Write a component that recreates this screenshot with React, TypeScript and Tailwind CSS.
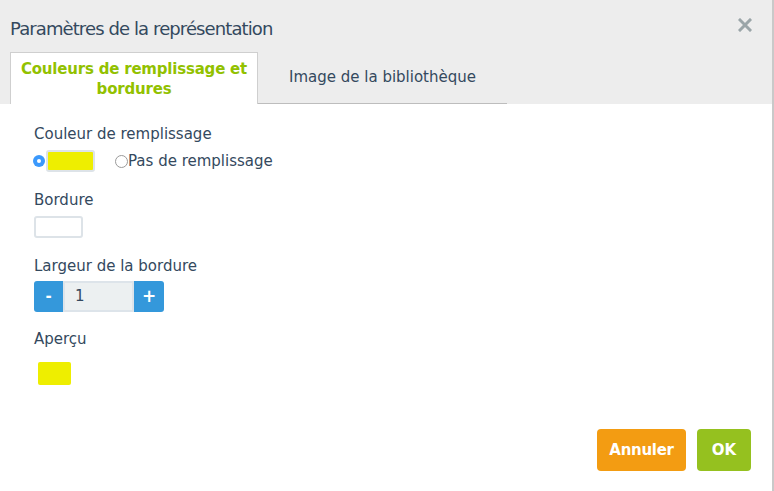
import React from 'react';

const FONT = { fontFamily: '"DejaVu Sans", Verdana, sans-serif' };

const Label: React.FC<{ children: React.ReactNode; className?: string }> = ({ children, className }) => (
  <div className={`text-[15px] leading-[20px] text-[#34495e] pt-[1px] -mb-[1px] ${className ?? ''}`}>{children}</div>
);

export default function App() {
  return (
    <div className="w-[774px] h-[491px] bg-white flex flex-col border-r-2 border-[#c9c9c9]" style={FONT}>
      {/* header + tabs */}
      <div className="h-[104px] bg-[#ededed] flex flex-col pl-[10px] relative">
        <div className="pt-[17px] h-[52px] text-[18px] leading-[24px] text-[#34495e] tracking-[-0.9px]">
          Paramètres de la représentation
        </div>
        <button className="absolute right-[20px] top-[18px] w-[14px] h-[14px]">
          <svg viewBox="0 0 14 14" className="w-full h-full">
            <path d="M2 2 L12 12 M12 2 L2 12" stroke="#9aa5a8" strokeWidth="3" strokeLinecap="square" />
          </svg>
        </button>
        <div className="flex items-end flex-1">
          <div className="w-[248px] h-[52px] bg-white border border-b-0 border-[#cfcfcf] flex items-center justify-center text-center text-[15px] leading-[20px] font-bold text-[#92c100] tracking-[-0.2px]">
            Couleurs de remplissage et<br />bordures
          </div>
          <div className="w-[249px] h-[52px] border-b border-[#bdbdbd] flex items-center justify-center text-[15px] text-[#34495e]">
            Image de la bibliothèque
          </div>
        </div>
      </div>

      {/* body */}
      <div className="flex-1 flex flex-col pt-[19px]">
        <div className="flex flex-col px-[34px]">
          <Label>Couleur de remplissage</Label>
          <div className="flex items-center h-[22px] mt-[7px] -ml-[1px]">
            <span className="w-[12px] h-[12px] rounded-full bg-[#3b99fc] flex items-center justify-center">
              <span className="w-[4px] h-[4px] rounded-full bg-white" />
            </span>
            <span className="ml-[1px] w-[49px] h-[22px] rounded-[3px] border-2 border-[#dde3e8] bg-[#eeee00]" />
            <span className="ml-[20px] w-[13px] h-[13px] rounded-full border border-[#9a9a9a] bg-white" />
            <span className="text-[15px] text-[#34495e] leading-[20px]">Pas de remplissage</span>
          </div>

          <Label className="mt-[17px]">Bordure</Label>
          <div className="mt-[7px] w-[49px] h-[22px] rounded-[3px] border-2 border-[#dde3e8] bg-white" />

          <Label className="mt-[17px]">Largeur de la bordure</Label>
          <div className="mt-[6px] flex h-[31px]">
            <button className="w-[29px] h-full bg-[#3498db] rounded-l-[3px] text-white font-bold text-[15px]">-</button>
            <div className="w-[71px] h-full bg-[#ecf0f1] border-2 border-[#dde4ea] flex items-center pl-[10px] text-[15px] text-[#34495e]">
              1
            </div>
            <button className="w-[30px] h-full bg-[#3498db] rounded-r-[3px] text-white font-bold text-[17px]">+</button>
          </div>

          <Label className="mt-[16px]">Aperçu</Label>
          <div className="mt-[14px] ml-[4px] w-[33px] h-[23px] rounded-[2px] bg-[#eeee00]" />
        </div>

        <div className="flex justify-end gap-[11px] mt-[44px] pr-[21px]">
          <button className="w-[89px] h-[42px] rounded-[4px] bg-[#f39c12] text-white font-bold text-[15px] tracking-[-0.3px]">Annuler</button>
          <button className="w-[54px] h-[42px] rounded-[4px] bg-[#95c11f] text-white font-bold text-[15px]">OK</button>
        </div>
      </div>
    </div>
  );
}
